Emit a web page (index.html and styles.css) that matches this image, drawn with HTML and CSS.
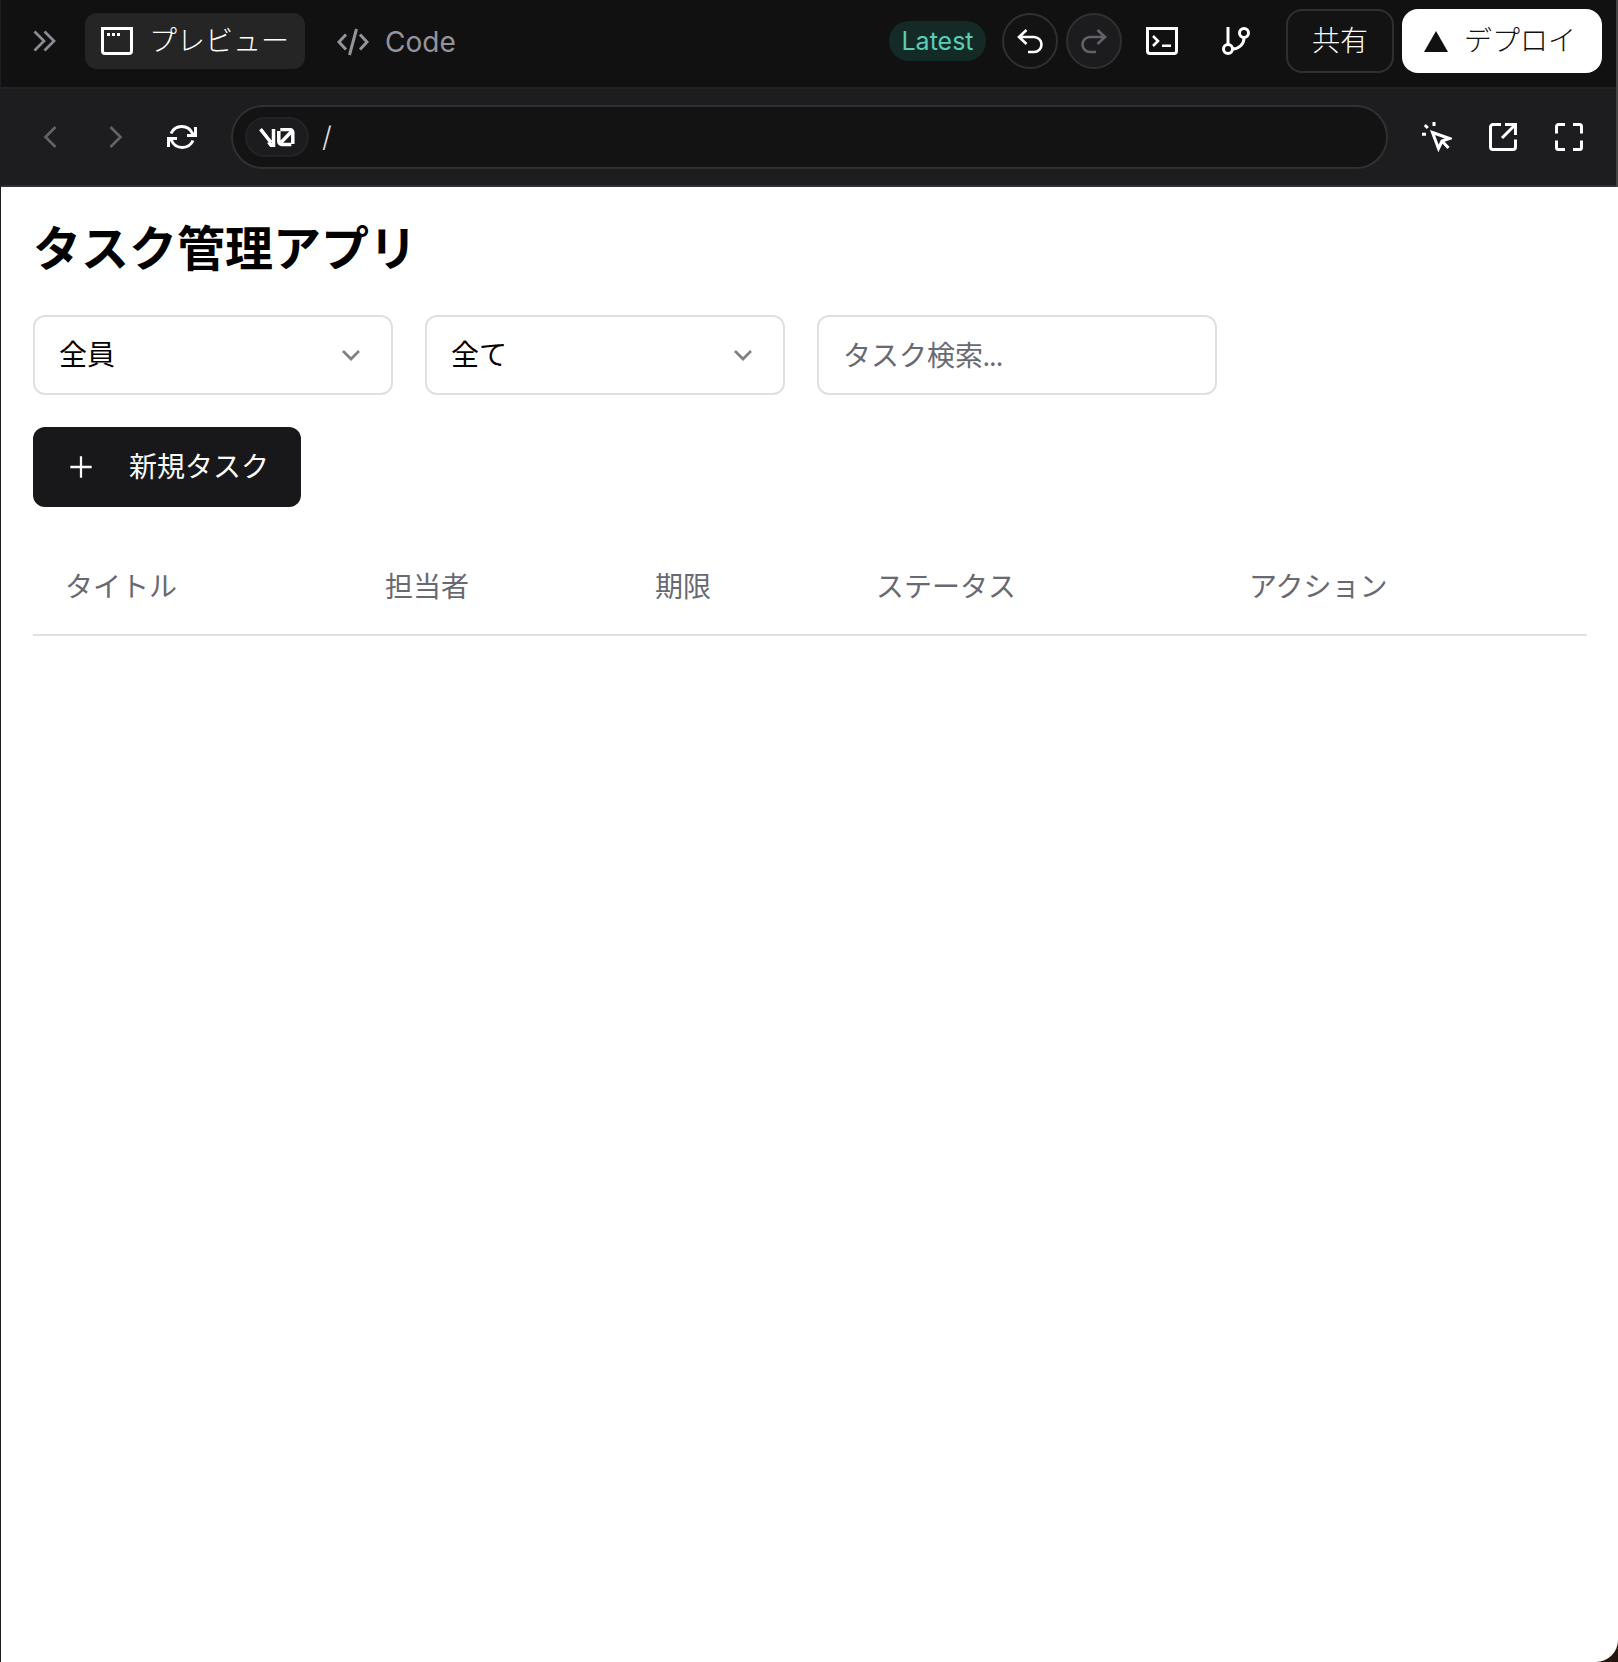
FILE: index.html
```html
<!DOCTYPE html>
<html lang="ja">
<head>
    <meta charset="UTF-8">
    <meta name="viewport" content="width=device-width, initial-scale=1.0">
    <title>タスク管理アプリ</title>
    <link rel="stylesheet" href="styles.css">
</head>
<body>
    <div class="window">
        <div class="chrome">
            <header class="topbar">
                <button class="collapse-btn" aria-label="Collapse">
                    <svg width="24" height="24" viewBox="0 0 24 24"><path d="M2.500 2.500 12 12l-9.500 9.500M12.500 2.500 22 12l-9.500 9.500"/></svg>
                </button>
                <button class="tab active">
                    <svg width="32" height="28" viewBox="0 0 32 28"><path stroke-width="3" stroke-linejoin="miter" d="M1.500 1.500h29v22.500a2.500 2.500 0 0 1-2.500 2.500H4A2.500 2.500 0 0 1 1.500 24z"/><path stroke="none" fill="currentColor" d="M6 6h3v3H6zM11 6h3v3h-3zM16 6h3v3h-3z"/></svg>
                    プレビュー
                </button>
                <button class="tab code">
                    <svg width="32" height="28" viewBox="0 0 32 28"><path stroke-width="3" d="M9 6.500 2 14l7 7.500M23 6.500l7 7.500-7 7.500M19.500 1l-7 26"/></svg>
                    Code
                </button>
                <div class="topbar-right">
                    <span class="badge">Latest</span>
                    <button class="round-btn" aria-label="Undo">
                        <svg width="26" height="26" viewBox="0 0 26 26"><path d="M9.500 2 2 9l7.500 7M2.500 9H17a7.500 7.500 0 0 1 0 15h-6"/></svg>
                    </button>
                    <button class="round-btn disabled" aria-label="Redo" disabled>
                        <svg width="26" height="26" viewBox="0 0 26 26"><path d="M16.500 2 24 9l-7.500 7M23.500 9H9a7.500 7.500 0 0 0 0 15h6"/></svg>
                    </button>
                    <button class="icon-btn terminal" aria-label="Terminal">
                        <svg width="32" height="28" viewBox="0 0 32 28"><path stroke-width="3" stroke-linejoin="miter" d="M1.500 1.500h29v22.500a2.500 2.500 0 0 1-2.500 2.500H4A2.500 2.500 0 0 1 1.500 24z"/><path stroke-width="2.600" d="m7 9 5 5-5 5M16 18.800h9"/></svg>
                    </button>
                    <button class="icon-btn branch" aria-label="Branch">
                        <svg width="28" height="28" viewBox="0 0 28 28"><g stroke-width="3"><path d="M6 0v17M10.500 22C17 22 22 17 22 11"/><circle cx="6" cy="22" r="4.500"/><circle cx="22" cy="6" r="4.500"/></g></svg>
                    </button>
                    <button class="btn share">共有</button>
                    <button class="btn deploy">
                        <svg width="24" height="21" viewBox="0 0 24 21"><path stroke="none" fill="currentColor" d="M12 0l12 21H0z"/></svg>
                        デプロイ
                    </button>
                </div>
            </header>

            <nav class="browser-bar">
                <button class="nav-btn back" aria-label="Back">
                    <svg width="14" height="24" viewBox="0 0 14 24"><path d="M12.500 2 2.500 12l10 10"/></svg>
                </button>
                <button class="nav-btn forward" aria-label="Forward">
                    <svg width="14" height="24" viewBox="0 0 14 24"><path d="M1.500 2l10 10-10 10"/></svg>
                </button>
                <button class="nav-btn reload" aria-label="Reload">
                    <svg width="30" height="28" viewBox="0 0 30 28"><path d="M4 10.500A11.800 11.800 0 0 1 25.500 10.500L27 12M28.500 4v8.500h-8.500M26 17.500A11.800 11.800 0 0 1 4.500 17.500L3 16M1.500 24v-8.500h8.500"/></svg>
                </button>
                <div class="url-bar">
                    <span class="url-logo">
                        <svg width="36" height="19" viewBox="0 0 36 19"><path d="M1.500 1.200 12 14.500M14.500 1v16.200h-2.500L9.500 14M33.800 16V4.500a3 3 0 0 0-3-3h-9.500M19.800 3v10.500a3 3 0 0 0 3 3h9.500M20.500 16 33.500 2.500"/></svg>
                    </span>
                    <span class="url-path">/</span>
                </div>
                <button class="nav-btn inspect" aria-label="Inspect">
                    <svg width="30" height="30" viewBox="0 0 30 30"><path d="M10.500 10.500 27.500 16.500 20 19 16.500 26.500zM20 19l6.500 7M0 12.200h4M12 0v4M2.800 3l3 3"/></svg>
                </button>
                <button class="nav-btn external" aria-label="Open in new tab">
                    <svg width="28" height="28" viewBox="0 0 28 28"><path d="M12 1.500H4A2.500 2.500 0 0 0 1.500 4v20A2.500 2.500 0 0 0 4 26.500h20a2.500 2.500 0 0 0 2.500-2.500v-7.500M16 1.500h10.500V12M26 2 13 15"/></svg>
                </button>
                <button class="nav-btn fullscreen" aria-label="Fullscreen">
                    <svg width="28" height="28" viewBox="0 0 28 28"><path d="M1.500 10.500v-7a2 2 0 0 1 2-2h6.500M18 1.500h6.500a2 2 0 0 1 2 2v7M26.500 17.500v7a2 2 0 0 1-2 2H18M10 26.500H3.500a2 2 0 0 1-2-2v-7"/></svg>
                </button>
            </nav>
        </div>

        <main class="app">
            <h1>タスク管理アプリ</h1>
            <div class="filters">
                <button class="select">
                    全員
                    <svg width="32" height="32" viewBox="0 0 24 24"><path d="m6 9 6 6 6-6"/></svg>
                </button>
                <button class="select">
                    全て
                    <svg width="32" height="32" viewBox="0 0 24 24"><path d="m6 9 6 6 6-6"/></svg>
                </button>
                <input class="search" type="text" placeholder="タスク検索...">
                <button class="new-task">
                    <svg width="32" height="32" viewBox="0 0 24 24"><path d="M4 12h16M12 4v16"/></svg>
                    新規タスク
                </button>
            </div>
            <table class="tasks">
                <thead>
                    <tr>
                        <th class="col-title">タイトル</th>
                        <th class="col-assignee">担当者</th>
                        <th class="col-due">期限</th>
                        <th class="col-status">ステータス</th>
                        <th>アクション</th>
                    </tr>
                </thead>
                <tbody></tbody>
            </table>
        </main>
    </div>
</body>
</html>
```

FILE: styles.css
```css
:root {
    --bar-bg: #111111;
    --chrome-bg: #1d1d1f;
    --chrome-border: #303031;
    --muted-icon: #62626a;
    --border-color: #e0e0e0;
    --text-secondary: #696972;
}

* {
    margin: 0;
    padding: 0;
    box-sizing: border-box;
}

body {
    font-family: Inter, "Noto Sans CJK JP", sans-serif;
    font-size: 28px;
    line-height: 40px;
    background-color: #24160e;
}

button,
input {
    font: inherit;
    color: inherit;
    background: none;
    border: none;
}

svg {
    display: block;
    flex: none;
    fill: none;
    stroke: currentColor;
    stroke-width: 3;
}

.window {
    height: 1662px;
    background-color: #ffffff;
    border-left: 1px solid #1e1d22;
    border-bottom-right-radius: 22px;
    overflow: hidden;
}

/* Editor chrome */
.chrome {
    color: #ffffff;
    border-right: 2px solid #444444;
}

.topbar {
    display: flex;
    align-items: center;
    height: 87px;
    padding: 0 14px 5px 31px;
    background-color: var(--bar-bg);
}

.collapse-btn {
    color: #8c8c94;
    margin-right: 29px;
}

.collapse-btn svg {
    stroke-width: 2.700;
}

.tab {
    display: flex;
    align-items: center;
    gap: 16px;
    height: 56px;
    padding: 0 16px;
    border-radius: 12px;
}

.tab.active {
    width: 220px;
    background-color: #252525;
    white-space: nowrap;
    font-weight: 300;
}

.tab.code {
    margin-left: 16px;
    padding-top: 1px;
    color: #94949c;
    font-size: 28px;
}

.topbar-right {
    display: flex;
    align-items: center;
    margin-left: auto;
}

.badge {
    width: 97px;
    height: 40px;
    margin-right: 16px;
    border-radius: 20px;
    background-color: #142a27;
    color: #58cdb5;
    font-size: 25px;
    text-align: center;
}

.round-btn {
    display: grid;
    place-items: center;
    width: 56px;
    height: 56px;
    margin-right: 8px;
    border: 2px solid var(--chrome-border);
    border-radius: 50%;
    background-color: #131313;
}

.round-btn svg {
    stroke-width: 2.600;
}

.round-btn.disabled {
    background-color: #1c1c1f;
    color: #62626a;
}

.terminal {
    margin-left: 16px;
}

.branch {
    margin: 0 36px 0 44px;
}

.btn {
    display: flex;
    align-items: center;
    justify-content: center;
    height: 64px;
    border-radius: 16px;
    font-weight: 300;
}

.share {
    width: 108px;
    border: 2px solid var(--chrome-border);
    background-color: #131313;
}

.deploy {
    justify-content: flex-start;
    width: 200px;
    gap: 16px;
    margin-left: 8px;
    padding-left: 22px;
    background-color: #ffffff;
    color: #111111;
}

.browser-bar {
    display: flex;
    align-items: center;
    height: 100px;
    padding: 0 33px 0 42px;
    background-color: var(--chrome-bg);
    border-top: 2px solid #232324;
    border-bottom: 2px solid var(--chrome-border);
}

.back,
.forward {
    color: var(--muted-icon);
}

.back svg,
.forward svg {
    stroke-width: 2.600;
}

.forward {
    margin-left: 52px;
}

.reload {
    margin-left: 44px;
}

.url-bar {
    display: flex;
    align-items: center;
    flex: 1;
    height: 64px;
    margin: 0 34px;
    padding: 0 12px;
    border: 2px solid var(--chrome-border);
    border-radius: 32px;
    background-color: #131313;
}

.url-logo {
    display: grid;
    place-items: center;
    width: 64px;
    height: 40px;
    border: 2px solid #232327;
    border-radius: 20px;
    background-color: #1c1c1f;
}

.url-logo svg {
    stroke-width: 3.5;
}

.url-path {
    margin-left: 13px;
    color: #dddddd;
    font-weight: 300;
}

.external {
    margin-left: 37px;
}

.fullscreen {
    margin-left: 38px;
}

/* Task app */
.app {
    padding: 30px 32px 32px;
    color: #000000;
}

h1 {
    margin-bottom: 34px;
    font-size: 48px;
    font-weight: 700;
    line-height: 64px;
}

.filters {
    display: flex;
    flex-wrap: wrap;
    gap: 32px;
    margin-bottom: 32px;
}

.select,
.search {
    width: 360px;
    height: 80px;
    padding: 0 24px;
    border: 2px solid var(--border-color);
    border-radius: 12px;
}

.select {
    display: flex;
    align-items: center;
    justify-content: space-between;
}

.select svg {
    color: #808080;
    stroke-width: 2;
}

.search {
    width: 400px;
    margin-right: 200px;
    font-family: Lato, "Noto Sans CJK JP", sans-serif;
}

.search::placeholder {
    color: var(--text-secondary);
}

.new-task {
    display: flex;
    align-items: center;
    gap: 32px;
    width: 268px;
    height: 80px;
    padding: 0 32px;
    border-radius: 12px;
    background-color: #18181a;
    color: #fafafa;
    white-space: nowrap;
}

.new-task svg {
    stroke-width: 1.700;
}

.tasks {
    width: 1554px;
    table-layout: fixed;
    border-collapse: collapse;
}

.tasks th {
    height: 96px;
    padding: 0 32px;
    border-bottom: 2px solid var(--border-color);
    color: var(--text-secondary);
    font-weight: 400;
    text-align: left;
}

.col-title {
    width: 320px;
}

.col-assignee {
    width: 270px;
}

.col-due {
    width: 221px;
}

.col-status {
    width: 373px;
}
```
